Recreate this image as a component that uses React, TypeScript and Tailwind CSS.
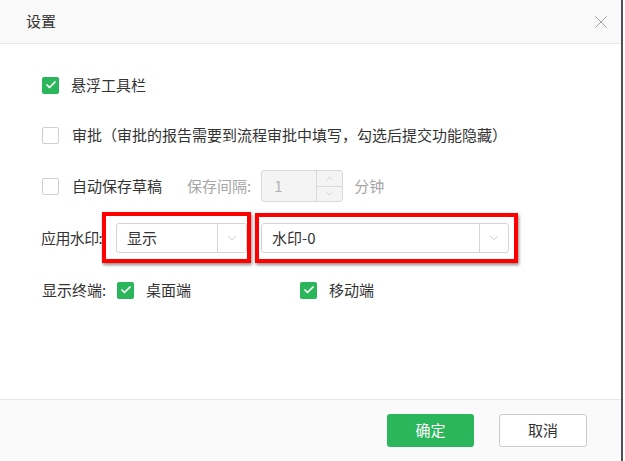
import { Check, ChevronDown, ChevronUp, X } from "lucide-react";
import type { ReactNode } from "react";

const FONT = { fontFamily: '"Microsoft YaHei", "Noto Sans CJK SC", "Noto Sans", sans-serif' };

function Checkbox({ checked }: { checked?: boolean }) {
  return checked ? (
    <span className="flex h-[17px] w-[17px] shrink-0 items-center justify-center rounded-[2px] bg-[#2bb65b]">
      <Check className="h-[12px] w-[12px] text-white" strokeWidth={3.5} />
    </span>
  ) : (
    <span className="h-[17px] w-[17px] shrink-0 rounded-[2px] border border-[#cfcfcf] bg-white" />
  );
}

function Select({ value, width }: { value: string; width: string }) {
  return (
    <div
      className={`flex h-[30px] items-center rounded-[3px] border border-[#d4d4d4] bg-white ${width}`}
    >
      <span className="flex-1 pl-[10px] text-[15px] text-[#333]">{value}</span>
      <span className="flex h-full w-[29px] items-center justify-center border-l border-[#d4d4d4]">
        <ChevronDown className="h-[14px] w-[14px] text-[#c4c4c4]" strokeWidth={1.5} />
      </span>
    </div>
  );
}

/** Red annotation box painted over a control */
function Marked({ children, box }: { children: ReactNode; box: string }) {
  return (
    <div className="relative">
      {children}
      <div
        className={`pointer-events-none absolute border-4 border-[#ff0000] shadow-[1px_2px_3px_rgba(0,0,0,0.45)] ${box}`}
      />
    </div>
  );
}

export default function App() {
  return (
    <div className="h-[461px] w-[625px] bg-white" style={FONT}>
      <div className="flex h-full w-[623px] flex-col border-r-2 border-[#4f4f57]">
        {/* Header */}
        <div className="flex h-[44px] shrink-0 items-center justify-between border-b border-[#e8e8e8] bg-[#f9f9f9] pl-[26px] pr-[9px]">
          <span className="text-[15px] text-[#333]">设置</span>
          <X className="h-[22px] w-[22px] text-[#9a9a9a]" strokeWidth={1} />
        </div>

        {/* Body */}
        <div className="flex-1 pl-[42px] pt-[16px] text-[15px] text-[#333]">
          <div className="flex h-[50px] items-center gap-[12px]">
            <Checkbox checked />
            <span>悬浮工具栏</span>
          </div>
          <div className="flex h-[50px] items-center gap-[13px]">
            <Checkbox />
            <span>审批（审批的报告需要到流程审批中填写，勾选后提交功能隐藏）</span>
          </div>
          <div className="flex h-[52px] items-center">
            <Checkbox />
            <span className="ml-[13px]">自动保存草稿</span>
            <span className="ml-[25px] text-[#a6a6a6]">保存间隔:</span>
            <div className="ml-[10px] flex h-[32px] w-[82px] rounded-[3px] border border-[#d9d9d9] bg-[#f4f4f4]">
              <span className="flex flex-1 items-center pl-[12px] text-[#b3b3b3]">1</span>
              <div className="flex w-[26px] flex-col border-l border-[#d9d9d9]">
                <span className="flex flex-1 items-center justify-center border-b border-[#d9d9d9]">
                  <ChevronUp className="h-[11px] w-[11px] text-[#c8c8c8]" strokeWidth={1.5} />
                </span>
                <span className="flex flex-1 items-center justify-center">
                  <ChevronDown className="h-[11px] w-[11px] text-[#c8c8c8]" strokeWidth={1.5} />
                </span>
              </div>
            </div>
            <span className="ml-[11px] text-[#a6a6a6]">分钟</span>
          </div>
          <div className="flex h-[52px] items-center">
            <span className="relative z-20 -ml-px w-[75px] shrink-0 whitespace-nowrap tracking-[-0.6px]">
              应用水印:
            </span>
            <Marked box="-left-[14px] -right-[4px] -top-[11px] -bottom-[10px]">
              <Select value="显示" width="w-[131px]" />
            </Marked>
            <div className="ml-[14px]">
              <Marked box="-left-[6px] -right-[9px] -top-[10px] -bottom-[10px]">
                <Select value="水印-0" width="w-[248px]" />
              </Marked>
            </div>
          </div>
          <div className="flex h-[52px] items-center">
            <span className="w-[75px] shrink-0">显示终端:</span>
            <div className="flex w-[183px] items-center gap-[12px]">
              <Checkbox checked />
              <span>桌面端</span>
            </div>
            <div className="flex items-center gap-[12px]">
              <Checkbox checked />
              <span>移动端</span>
            </div>
          </div>
        </div>

        {/* Footer */}
        <div className="flex h-[62px] shrink-0 items-center justify-end gap-[25px] border-t border-[#e8e8e8] bg-[#fafafa] pr-[34px]">
          <button className="h-[33px] w-[87px] rounded-[3px] bg-[#2bb65b] text-[15px] text-white">
            确定
          </button>
          <button className="h-[33px] w-[88px] rounded-[3px] border border-[#cccccc] bg-white text-[15px] text-[#333]">
            取消
          </button>
        </div>
      </div>
    </div>
  );
}
